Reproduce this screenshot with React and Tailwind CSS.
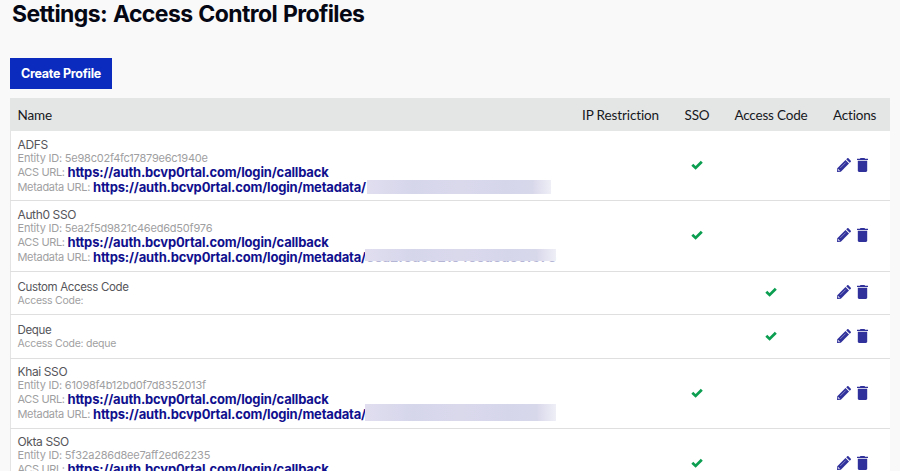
const LINK = "https://auth.bcvp0rtal.com/login/";

const profiles = [
  { name: "ADFS", id: "5e98c02f4fc17879e6c1940e", type: "sso", height: "h-[70px]", pad: "pt-[7px]", mask: "w-[184px] h-[14px] top-[49px] left-[357px]" },
  { name: "Auth0 SSO", id: "5ea2f5d9821c46ed6d50f976", type: "sso", height: "h-[71px]", pad: "pt-[7px]", mask: "w-[191px] h-[12px] top-[48px] left-[355px]", hidden: "5ea2f5d9821c46ed6d50f976" },
  { name: "Custom Access Code", code: "", type: "code", height: "h-[43px]" },
  { name: "Deque", code: "deque", type: "code", height: "h-[44px]" },
  { name: "Khai SSO", id: "61098f4b12bd0f7d8352013f", type: "sso", height: "h-[70px]", pad: "pt-[6px]", mask: "w-[191px] h-[17px] top-[45px] left-[355px]" },
  { name: "Okta SSO", id: "5f32a286d8ee7aff2ed62235", type: "sso", height: "h-[70px]", pad: "pt-[6px]" },
];

function PencilIcon() {
  return (
    <svg viewBox="0 0 14 14" className="size-[14px]" fill="currentColor">
      <path d="M0 14 .3 10.2 8.5 2 12 5.5 3.8 13.7z" />
      <path d="M9.2 1.3l.9-.9c.5-.5 1-.5 1.5 0l2 2c.5.5.5 1 0 1.5l-.9.9z" />
      <path d="M3.3 9.9 8.7 4.5" stroke="#b9b9de" strokeWidth=".6" />
      <path d="M1.2 11.1l1.7 1.7-1 .3-1-1z" fill="#fff" />
    </svg>
  );
}

function TrashIcon() {
  return (
    <svg viewBox="0 0 11 14" className="h-[14px] w-[11px]" fill="currentColor">
      <path d="M3.5 0h4l.6.7H11V2.1H0V.7h2.9z" />
      <path d="M.8 2.8h9.4v9.8c0 .8-.5 1.4-1.3 1.4H2.1c-.8 0-1.3-.6-1.3-1.4z" />
    </svg>
  );
}

function Check() {
  return (
    <svg viewBox="0 0 12 10" className="mb-[2px] h-[10px] w-[12px]" fill="none">
      <path d="M1.3 4.8 4.6 7.9 10.8 1.7" stroke="#0b9e51" strokeWidth="2.8" />
    </svg>
  );
}

function SsoDetails({ profile }) {
  return (
    <div className={`whitespace-nowrap ${profile.pad}`}>
      <div className="h-[13px] text-[12px] leading-[13px] tracking-[-0.38px] text-[#55555a]">{profile.name}</div>
      <div className="h-[14px] text-[11px] leading-[14px] tracking-[-0.21px] text-[#9f9fa2]">Entity ID: {profile.id}</div>
      <div className="flex h-[15px] items-center text-[11px] leading-[15px] tracking-[-0.38px] text-[#9f9fa2]">
        <span className="w-[50px]">ACS URL:</span>
        <a className="text-[13px] font-bold tracking-[-0.181px] text-[#10108e]">{LINK}callback</a>
      </div>
      <div className="flex h-[15px] items-center text-[11px] leading-[15px] tracking-[-0.32px] text-[#9f9fa2]">
        <span className="w-[75.5px]">Metadata URL:</span>
        <a className="text-[13px] font-bold tracking-[-0.17px] text-[#10108e]">{LINK}metadata/</a>
        {profile.hidden && <a className="text-[13px] font-bold tracking-[0.1px] text-[#b5b5d6]">{profile.hidden}</a>}
      </div>
    </div>
  );
}

function CodeDetails({ profile }) {
  return (
    <div className="pt-[8px] whitespace-nowrap">
      <div className="h-[14px] text-[11.5px] leading-[14px] tracking-[-0.35px] text-[#55555a]">{profile.name}</div>
      <div className="h-[13px] text-[10.5px] leading-[13px] tracking-[-0.26px] text-[#9f9fa2]">Access Code: {profile.code}</div>
    </div>
  );
}

function Row({ profile }) {
  const sso = profile.type === "sso";
  return (
    <div className={`relative flex shrink-0 border-b border-[#dfdfe0] bg-white ${profile.height}`}>
      <div className="w-[562px] border-l border-[#e4e4e5] pl-[6.5px]">
        {sso ? <SsoDetails profile={profile} /> : <CodeDetails profile={profile} />}
      </div>
      <div className="w-[97px]" />
      <div className="flex w-[56px] items-center justify-center">{sso && <Check />}</div>
      <div className="flex w-[92px] items-center justify-center">{!sso && <Check />}</div>
      <div className="flex w-[73px] items-center gap-[6px] pb-[2px] pl-[19.5px] text-[#31319c]">
        <PencilIcon />
        <TrashIcon />
      </div>
      {profile.mask && (
        <div
          className={`absolute bg-[linear-gradient(to_right,#e0deef_0%,#d6d6eb_25%,#dad9ec_50%,#d6d6eb_75%,#d8d8eb_90%,#efeff7_100%)] ${profile.mask}`}
        />
      )}
    </div>
  );
}

export default function App() {
  return (
    <div className="h-[473px] overflow-hidden bg-white font-['Inter',sans-serif]">
      <div className="flex h-[471px] flex-col overflow-hidden bg-[#f9f9f9] px-[10px]">
        <h1 className="h-[58px] shrink-0 pl-[2px] text-[23px] leading-[28px] font-bold tracking-[-0.6px] [word-spacing:1px] whitespace-nowrap text-[#050814]">
          Settings: Access Control Profiles
        </h1>
        <button className="h-[31px] w-[102px] shrink-0 bg-[#0a2bbd] pt-[2px] text-[12.5px] font-bold tracking-[-0.256px] whitespace-nowrap text-white">
          Create Profile
        </button>
        <div className="mt-[9px] flex w-[880px] shrink-0 flex-col">
          <div className="flex h-[33px] shrink-0 items-center bg-[#e4e6e5] pt-[2px] font-['Lato',sans-serif] text-[13.5px] tracking-[-0.18px] whitespace-nowrap text-[#16181d]">
            <div className="w-[562px] pl-[7.5px]">Name</div>
            <div className="w-[97px] text-center tracking-[-0.12px]">IP Restriction</div>
            <div className="w-[56px] text-center">SSO</div>
            <div className="w-[92px] text-center">Access Code</div>
            <div className="w-[73px] pl-[16px]">Actions</div>
          </div>
          <div className="flex flex-col">
            {profiles.map((profile) => (
              <Row key={profile.name} profile={profile} />
            ))}
          </div>
        </div>
      </div>
    </div>
  );
}
